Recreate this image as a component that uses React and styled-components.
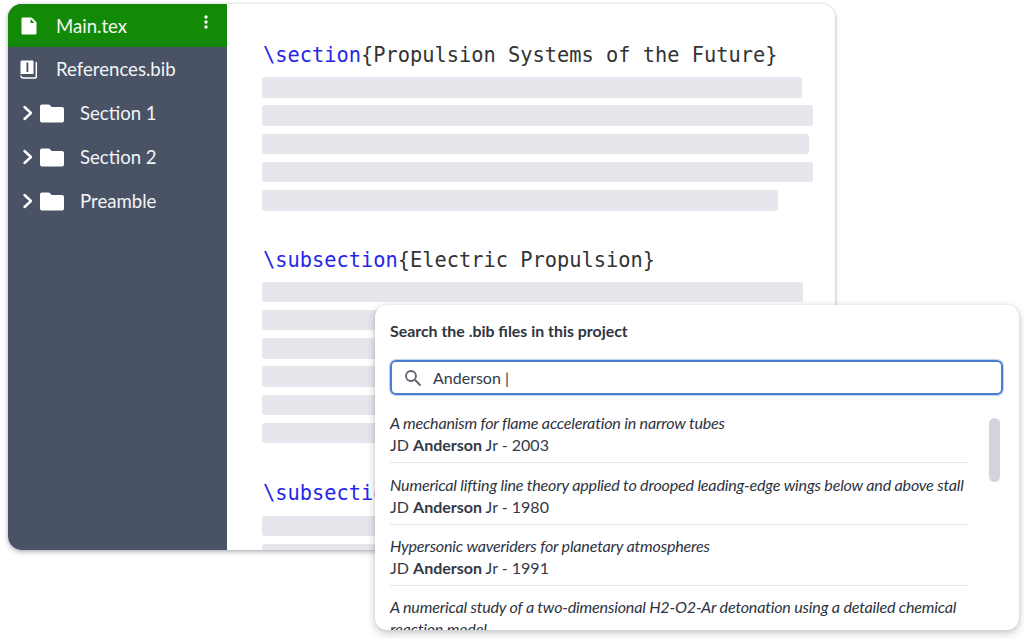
import React from "react";
import styled, { createGlobalStyle } from "styled-components";

const GlobalStyle = createGlobalStyle`
  html, body {
    margin: 0;
    padding: 0;
    background: #fff;
    font-family: Lato, "Liberation Sans", sans-serif;
  }
`;

const Page = styled.div`
  position: relative;
  width: 1024px;
  height: 639px;
  overflow: hidden;
  padding: 4px 189px 0 8px;
  box-sizing: border-box;
`;

const EditorWindow = styled.div`
  display: flex;
  height: 546px;
  border-radius: 14px;
  overflow: hidden;
  background: #fff;
  box-shadow: 0 2px 5px rgba(30, 37, 48, 0.32), 0 0 3px rgba(30, 37, 48, 0.1);
`;

const Sidebar = styled.nav`
  width: 219px;
  flex: none;
  background: #495365;
  color: #fff;
`;

const TreeRow = styled.div`
  display: flex;
  align-items: center;
  height: 44px;
  padding-left: ${(p) => (p.$folder ? "14px" : "12px")};
  background: ${(p) => (p.$active ? "#138a07" : "transparent")};
  font-size: 18.6px;
  color: #f4f5f6;
  &:first-child {
    height: 43px;
  }
`;

const FileSlot = styled.span`
  display: flex;
  justify-content: center;
  width: 18px;
  margin-right: 18px;
`;

const FolderIcon = styled.svg`
  width: 24px;
  height: 19px;
  margin: 0 16px 0 6px;
`;

const Kebab = styled.svg`
  margin-left: auto;
  margin-right: 19px;
  margin-bottom: 7px;
`;

const Editor = styled.main`
  flex: 1;
  padding: 0 22px 0 35px;
  overflow: hidden;
`;

const Heading = styled.div`
  font-family: "DejaVu Sans Mono", monospace;
  font-size: 20.35px;
  line-height: 26px;
  white-space: nowrap;
  color: #333;
  margin: ${(p) => p.$top} 0 ${(p) => p.$bottom || "9px"} 1px;
`;

const Command = styled.span`
  color: #2626e8;
`;

const BarStack = styled.div`
  display: flex;
  flex-direction: column;
  gap: 7.75px;
`;

const Bar = styled.div`
  height: 20.5px;
  border-radius: 3px;
  background: #e6e7ec;
`;

const SearchPanel = styled.section`
  position: absolute;
  left: 375px;
  top: 305px;
  width: 644px;
  height: 325px;
  box-sizing: border-box;
  padding: 15px 16px 0 15px;
  background: #fff;
  border-radius: 12px;
  overflow: hidden;
  box-shadow: 0 3px 8px rgba(30, 37, 48, 0.26), 0 0 3px rgba(30, 37, 48, 0.1);
  color: #2d3340;
`;

const PanelTitle = styled.h2`
  margin: 0 0 19px;
  font-size: 15.9px;
  line-height: 21px;
  font-weight: 700;
  color: #2f3541;
`;

const SearchBox = styled.div`
  display: flex;
  align-items: center;
  box-sizing: border-box;
  height: 35px;
  margin-bottom: 7px;
  padding-left: 12px;
  border: 2px solid #4a7fcf;
  border-radius: 6px;
  box-shadow: 0 0 0 1px rgba(74, 127, 207, 0.35);
  font-size: 16px;
  color: #333a46;
`;

const SearchIcon = styled.svg`
  margin-right: 11px;
`;

const ResultArea = styled.div`
  position: relative;
  padding-right: 35px;
`;

const Thumb = styled.div`
  position: absolute;
  right: 3px;
  top: 16px;
  width: 11px;
  height: 64px;
  border-radius: 6px;
  background: #d3d5dc;
`;

const Result = styled.div`
  font-size: 16px;
  line-height: 22px;
  padding: 10.3px 0 6px;
  border-bottom: 1px solid #e4e6eb;
  &:last-of-type {
    border-bottom: none;
  }
`;

const ResultTitle = styled.div`
  font-style: italic;
  font-size: 16.1px;
  letter-spacing: -0.2px;
  width: 590px;
`;

const Author = styled.div`
  color: #333a46;
`;

const FileIcon = () => (
  <svg width="16" height="18" viewBox="0 0 16 18">
    <path
      fill="#fff"
      fillRule="evenodd"
      d="M2 .5h8.200a1 1 0 0 1 .7.3l4.300 4.300a1 1 0 0 1 .3.7V16a1.500 1.500 0 0 1-1.500 1.500H2A1.500 1.500 0 0 1 .5 16V2A1.500 1.500 0 0 1 2 .5zM9.500 2v3.500a.5.5 0 0 0 .5.5h3.500z"
    />
  </svg>
);

const BookIcon = () => (
  <svg width="18" height="19" viewBox="0 0 18 19" fill="none">
    <path
      fill="#fff"
      fillRule="evenodd"
      d="M2 .5h10.500c.6 0 1 .4 1 1V14h-11c-.9 0-1.600.2-2 .6V2c0-.8.7-1.500 1.500-1.500zM6.500 2.500V12h1.800V2.500z"
    />
    <path
      stroke="#fff"
      strokeWidth="1.500"
      strokeLinecap="round"
      d="M16.300 2.500V17c0 .6-.4 1-1 1H3a2.100 2.100 0 0 1-2.100-1.800"
    />
  </svg>
);

const Chevron = () => (
  <svg width="12" height="16" viewBox="0 0 12 16" fill="none">
    <path
      d="M2.500 2l6.500 6-6.500 6"
      stroke="#fff"
      strokeWidth="2.400"
      strokeLinecap="round"
      strokeLinejoin="round"
    />
  </svg>
);

const Folder = () => (
  <FolderIcon viewBox="0 0 24 19">
    <path
      fill="#fff"
      d="M2 .5h6.500c.5 0 1 .2 1.300.6l1.900 2H22a2 2 0 0 1 2 2V16.500a2 2 0 0 1-2 2H2a2 2 0 0 1-2-2V2.500a2 2 0 0 1 2-2z"
    />
  </FolderIcon>
);

const results = [
  { title: "A mechanism for flame acceleration in narrow tubes", rest: "Jr - 2003" },
  {
    title: "Numerical lifting line theory applied to drooped leading-edge wings below and above stall",
    rest: "Jr - 1980",
  },
  { title: "Hypersonic waveriders for planetary atmospheres", rest: "Jr - 1991" },
];

const firstBars = [540, 551, 547, 551, 516];
const secondBars = [541, 551, 551, 551, 551, 551];
const thirdBars = [551, 551];

const App = () => {
  return (
    <Page>
      <GlobalStyle />
      <EditorWindow>
        <Sidebar>
          <TreeRow $active>
            <FileSlot>
              <FileIcon />
            </FileSlot>
            Main.tex
            <Kebab width="4" height="14" viewBox="0 0 4 14" fill="#fff">
              <circle cx="2" cy="2" r="1.700" />
              <circle cx="2" cy="7" r="1.700" />
              <circle cx="2" cy="12" r="1.700" />
            </Kebab>
          </TreeRow>
          <TreeRow>
            <FileSlot>
              <BookIcon />
            </FileSlot>
            References.bib
          </TreeRow>
          {["Section 1", "Section 2", "Preamble"].map((name) => (
            <TreeRow $folder key={name}>
              <Chevron />
              <Folder />
              {name}
            </TreeRow>
          ))}
        </Sidebar>
        <Editor>
          <Heading $top="38px">
            <Command>\section</Command>
            {"{Propulsion Systems of the Future}"}
          </Heading>
          <BarStack>
            {firstBars.map((w, i) => (
              <Bar key={i} style={{ width: w }} />
            ))}
          </BarStack>
          <Heading $top="36px">
            <Command>\subsection</Command>
            {"{Electric Propulsion}"}
          </Heading>
          <BarStack>
            {secondBars.map((w, i) => (
              <Bar key={i} style={{ width: w }} />
            ))}
          </BarStack>
          <Heading $top="36.250px" $bottom="10px">
            <Command>\subsection</Command>
            {"{Chemical Propulsion}"}
          </Heading>
          <BarStack>
            {thirdBars.map((w, i) => (
              <Bar key={i} style={{ width: w }} />
            ))}
          </BarStack>
        </Editor>
      </EditorWindow>
      <SearchPanel>
        <PanelTitle>Search the .bib files in this project</PanelTitle>
        <SearchBox>
          <SearchIcon width="18" height="18" viewBox="0 0 18 18" fill="none">
            <circle cx="7" cy="7" r="5" stroke="#5a6270" strokeWidth="1.800" />
            <path d="M11 11l5.500 5.500" stroke="#5a6270" strokeWidth="1.800" />
          </SearchIcon>
          Anderson |
        </SearchBox>
        <ResultArea>
          <Thumb />
          {results.map((r) => (
            <Result key={r.title}>
              <ResultTitle>{r.title}</ResultTitle>
              <Author>
                JD <b>Anderson</b> {r.rest}
              </Author>
            </Result>
          ))}
          <Result>
            <ResultTitle>
              A numerical study of a two-dimensional H2-O2-Ar detonation using a detailed chemical
              reaction model
            </ResultTitle>
          </Result>
        </ResultArea>
      </SearchPanel>
    </Page>
  );
};

export default App;
